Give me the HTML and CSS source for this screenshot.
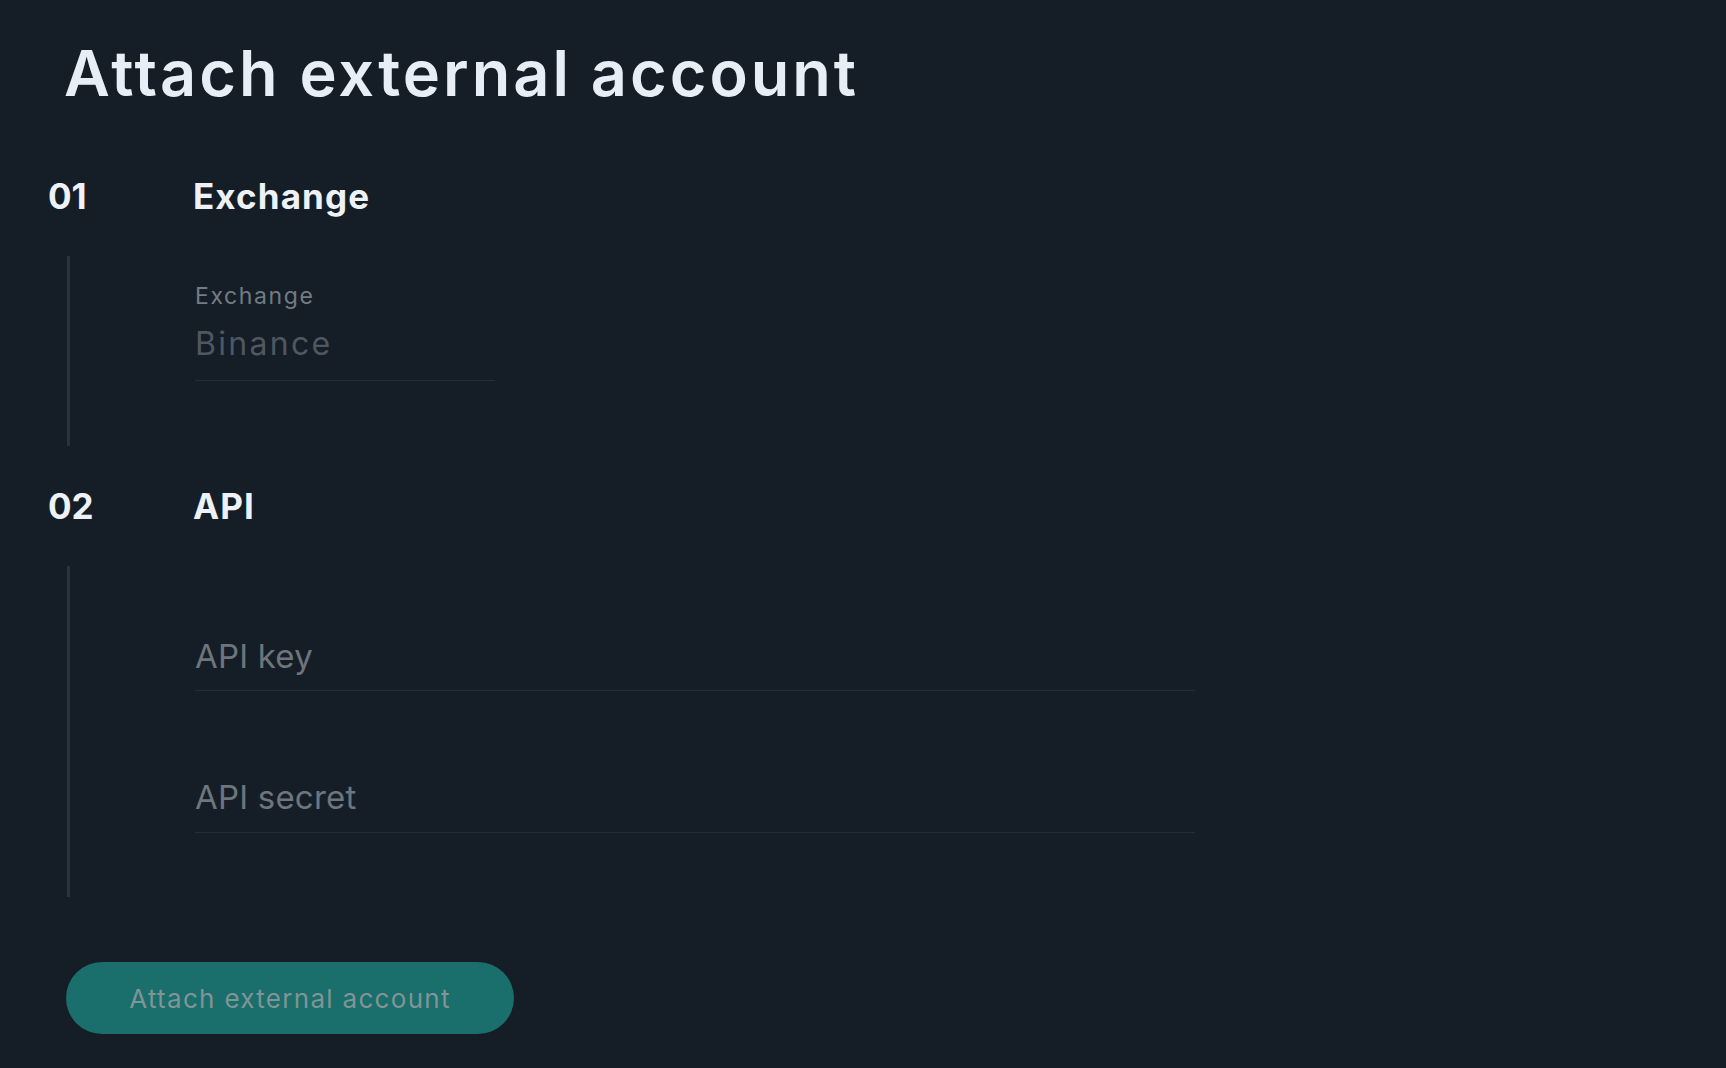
FILE: index.html
```html
<!DOCTYPE html>
<html lang="en">
<head>
<meta charset="utf-8">
<title>Attach external account</title>
<link rel="stylesheet" href="styles.css">
</head>
<body>
<main class="page">
  <h1 class="title">Attach external account</h1>

  <section class="step">
    <div class="step-head">
      <span class="step-num">01</span>
      <span class="step-title">Exchange</span>
    </div>
    <div class="step-body step-body-1">
      <div class="field field-select">
        <div class="field-label">Exchange</div>
        <div class="field-value">Binance</div>
      </div>
    </div>
  </section>

  <section class="step">
    <div class="step-head">
      <span class="step-num">02</span>
      <span class="step-title">API</span>
    </div>
    <div class="step-body step-body-2">
      <div class="field field-wide field-first">
        <div class="field-placeholder">API key</div>
      </div>
      <div class="field field-wide field-second">
        <div class="field-placeholder">API secret</div>
      </div>
    </div>
  </section>

  <button class="submit" type="button">Attach external account</button>
</main>
</body>
</html>
```

FILE: styles.css
```css
html, body {
  margin: 0;
  padding: 0;
  background: #151e27;
}

body {
  font-family: Inter, "Open Sans", "Liberation Sans", sans-serif;
  min-height: 1068px;
}

.page {
  padding: 35px 0 0 48px;
}

.title {
  margin: 0 0 65px 16px;
  font-size: 63px;
  line-height: 76px;
  font-weight: 600;
  color: #e8eef5;
  letter-spacing: 3px;
}

.step-head {
  display: flex;
  align-items: baseline;
  height: 40px;
  line-height: 40px;
  font-size: 35px;
  font-weight: 700;
  color: #eef2f7;
}

.step-num {
  width: 145px;
  flex: none;
}

.step-title {
  letter-spacing: 1.1px;
}

.step-body {
  margin: 40px 0 40px 19px;
  border-left: 3px solid #2a323b;
  padding-left: 125px;
  box-sizing: border-box;
}

.step-body-1 {
  height: 190px;
  padding-top: 26px;
}

.step-body-2 {
  height: 331px;
  padding-top: 70px;
  margin-bottom: 65px;
}

.field {
  border-bottom: 1px solid #252e37;
}

.field-select {
  width: 300px;
  padding-bottom: 16px;
}

.field-wide {
  width: 1000px;
  padding-bottom: 14px;
}

.field-second {
  margin-top: 86px;
  padding-bottom: 15px;
}

.field-label {
  font-size: 23px;
  line-height: 28px;
  color: #737b83;
  letter-spacing: 1.6px;
}

.field-value {
  margin-top: 14px;
  font-size: 32px;
  line-height: 40px;
  color: #4f5760;
  letter-spacing: 2.3px;
}

.field-placeholder {
  font-size: 33px;
  line-height: 40px;
  color: #6d757d;
  letter-spacing: 0.2px;
}

.submit {
  display: block;
  margin-left: 18px;
  width: 448px;
  height: 72px;
  border: none;
  border-radius: 36px;
  background: #1a6e6b;
  color: #809595;
  font-family: Inter, "Open Sans", "Liberation Sans", sans-serif;
  font-size: 26px;
  letter-spacing: 1.3px;
  padding: 0;
}
```
